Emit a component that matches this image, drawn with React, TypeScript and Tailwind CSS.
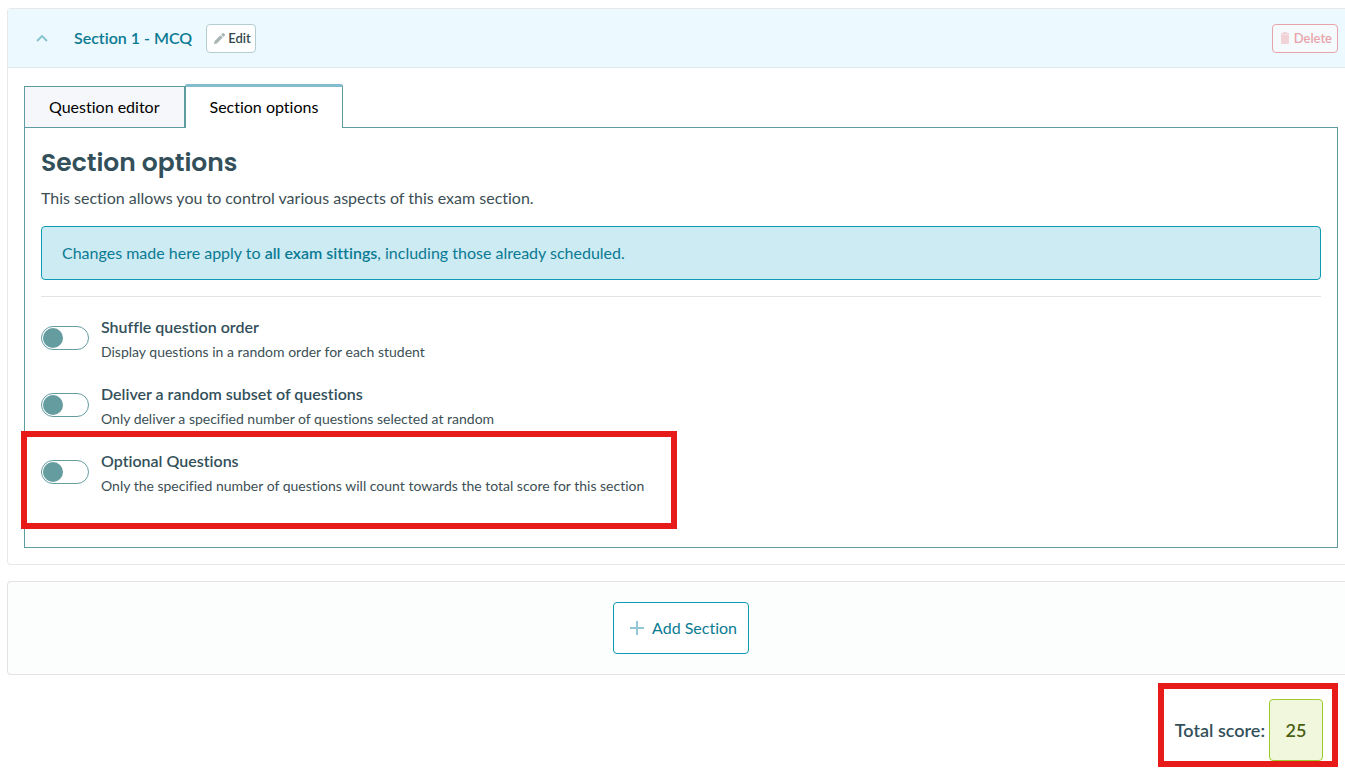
import React, { useState } from 'react';

interface SectionOption {
  id: string;
  title: string;
  description: string;
  highlighted?: boolean;
}

const OPTIONS: SectionOption[] = [
  {
    id: 'shuffle',
    title: 'Shuffle question order',
    description: 'Display questions in a random order for each student',
  },
  {
    id: 'subset',
    title: 'Deliver a random subset of questions',
    description: 'Only deliver a specified number of questions selected at random',
  },
  {
    id: 'optional',
    title: 'Optional Questions',
    description: 'Only the specified number of questions will count towards the total score for this section',
    highlighted: true,
  },
];

// Icons
const ChevronUpIcon = () => (
  <svg width="12" height="8" viewBox="0 0 12 8" fill="none" stroke="#84c3d0" strokeWidth="1.8" aria-hidden="true">
    <path d="M1 7l5-5 5 5" />
  </svg>
);

const PencilIcon = () => (
  <svg width="11" height="11" viewBox="0 0 11 11" fill="#a9b4b7" aria-hidden="true">
    <path d="M0 11l.6-2.900L6.400 2.300l2.300 2.300L2.900 10.400z" />
    <path d="M7.100 1.600L8.300.4a1.200 1.200 0 0 1 1.700 0l.6.6a1.200 1.200 0 0 1 0 1.700L9.400 3.900z" />
  </svg>
);

const TrashIcon = () => (
  <svg width="8" height="12" viewBox="0 0 8 12" fill="#f1d3d7" aria-hidden="true">
    <path d="M2.500 0h3l.5 1h2v1.300H0V1h2z" />
    <path d="M0 2.600h8V11a1 1 0 0 1-1 1h-6a1 1 0 0 1-1-1z" />
  </svg>
);

const PlusIcon = () => (
  <svg width="14" height="14" viewBox="0 0 14 14" stroke="#92c8d5" strokeWidth="2" aria-hidden="true">
    <path d="M7 0v14M0 7h14" />
  </svg>
);

const OptionRow = ({ option }: { option: SectionOption }) => {
  const [enabled, setEnabled] = useState(false);

  return (
    <div className="relative flex items-start gap-3">
      <input
        id={option.id}
        type="checkbox"
        role="switch"
        checked={enabled}
        onChange={() => setEnabled(!enabled)}
        className="mt-[11px] h-6 w-12 shrink-0 appearance-none rounded-full border border-[#649ca0] bg-white p-px before:block before:size-5 before:rounded-full before:bg-[#649ca0] checked:before:ml-6"
      />
      <div>
        <label htmlFor={option.id} className="block text-base leading-6 font-semibold text-[#33505a]">
          {option.title}
        </label>
        <p className="text-sm leading-[25px] text-[#3c4f55]">{option.description}</p>
      </div>
      {option.highlighted && (
        <div className="pointer-events-none absolute -top-[18px] -left-5 h-[98px] w-[656px] border-6 border-[#e81b1b]" />
      )}
    </div>
  );
};

const SectionHeader = () => (
  <header className="flex h-[59px] items-center border-b border-[#e1e9ec] bg-[#ecf9fe] pr-[7px] pl-7">
    <button type="button" aria-label="Collapse section" className="mr-[26px]">
      <ChevronUpIcon />
    </button>
    <h2 className="mr-[14px] text-base font-semibold text-[#0b7a93]">Section 1 - MCQ</h2>
    <button
      type="button"
      className="flex h-[29px] items-center gap-[3px] rounded border border-[#b3cdd1] bg-white pr-1 pl-[7px] text-[13px] leading-5 font-semibold text-[#33474e]"
    >
      <PencilIcon />
      Edit
    </button>
    <button
      type="button"
      className="ml-auto flex h-[29px] items-center gap-[5px] rounded border border-[#e9a3aa] bg-[#f5fbfd] pr-[5px] pl-2 text-[13px] leading-5 font-semibold text-[#e9a3aa]"
    >
      <TrashIcon />
      Delete
    </button>
  </header>
);

function App() {
  return (
    <div className="overflow-x-hidden bg-white pt-2 pl-[7px] font-[Lato,sans-serif] text-base text-[#3c4f55] [font-variant-ligatures:none]">
      <section className="rounded-l border-y border-l border-[#e6e9eb]">
        <SectionHeader />

        <div className="pt-4 pr-[7px] pb-4 pl-4">
          {/* Tabs */}
          <div role="tablist" className="relative flex items-end text-black">
            <button
              type="button"
              role="tab"
              aria-selected="false"
              className="h-[42px] border border-[#5f9ca0] bg-[#f6f7fb] px-6"
            >
              Question editor
            </button>
            <button
              type="button"
              role="tab"
              aria-selected="true"
              className="h-11 rounded-t-xs border-x border-t-3 border-x-[#5f9ca0] border-t-[#84bccf] bg-white px-6 pb-0.5"
            >
              Section options
            </button>
          </div>

          <div role="tabpanel" className="-mt-px border border-[#5f9ca0] px-4 pt-[17px] pb-[49px]">
            <h1 className="font-[Poppins,Inter,sans-serif] text-[25px] leading-9 font-semibold text-[#33505a]">
              Section options
            </h1>
            <p className="mt-[5px] mb-4 leading-6">
              This section allows you to control various aspects of this exam section.
            </p>

            <div className="rounded border border-[#0d9ab5] bg-[#cdebf3] px-5 py-[14px] leading-6 text-[#0b7a93]">
              Changes made here apply to <strong className="font-semibold">all exam sittings</strong>, including those
              already scheduled.
            </div>

            <hr className="my-4 border-[#e1e3e4]" />

            <div className="flex flex-col gap-[18px] pt-0.5">
              {OPTIONS.map((option) => (
                <OptionRow key={option.id} option={option} />
              ))}
            </div>
          </div>
        </div>
      </section>

      <section className="mt-4 flex justify-center rounded-l border-y border-l border-[#e1e3e4] bg-[#fcfefe] py-5 pl-[9px]">
        <button
          type="button"
          className="flex h-[52px] items-center gap-2 rounded border border-[#0d9ab5] bg-white pr-[11px] pl-4 text-[#0b7a93]"
        >
          <PlusIcon />
          Add Section
        </button>
      </section>

      <footer className="mt-2 flex justify-end pr-[7px]">
        <div className="flex items-center gap-1 border-6 border-[#e81b1b] pt-[10px] pr-[9px] pl-[11px] text-lg font-semibold text-[#33505a]">
          <span>Total score:</span>
          <output className="flex h-[62px] w-[54px] items-center justify-center rounded border border-[#9bcb2f] bg-[#f1f7dd] text-[#4b5f14]">
            25
          </output>
        </div>
      </footer>
    </div>
  );
}

export default App;
